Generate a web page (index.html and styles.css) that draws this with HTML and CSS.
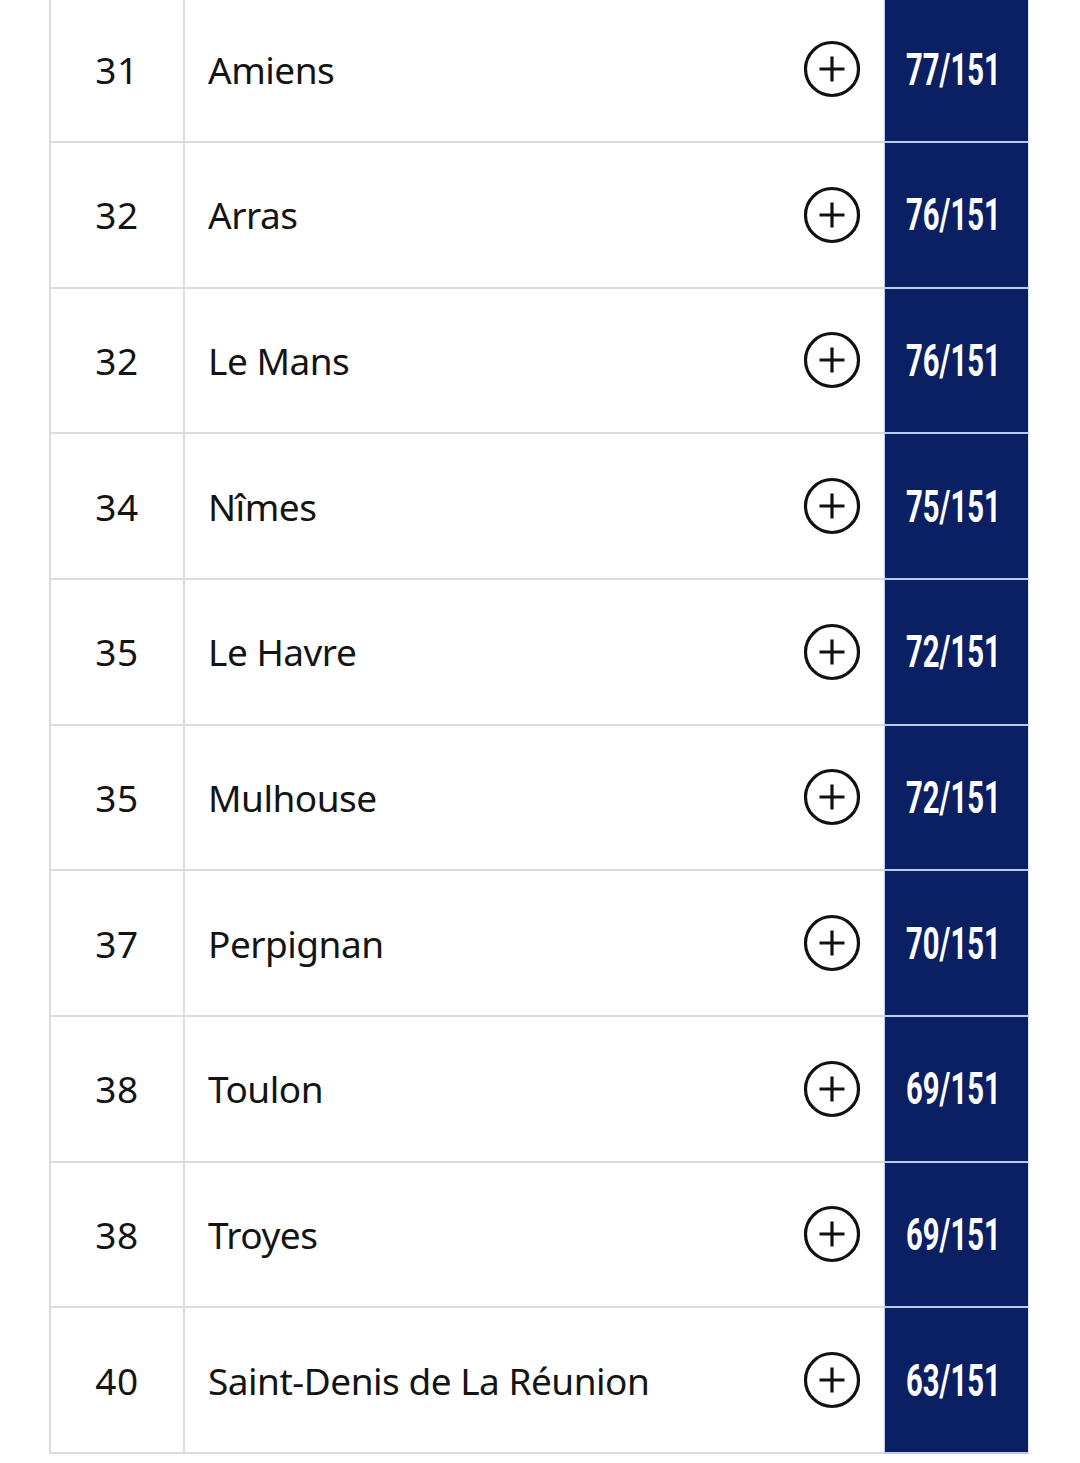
FILE: index.html
```html
<!DOCTYPE html>
<html lang="fr">
<head>
<meta charset="utf-8">
<title>Classement</title>
<link rel="stylesheet" href="styles.css">
</head>
<body>
<div class="table">
  <div class="row"><div class="rank">31</div><div class="name"><span>Amiens</span><svg class="plus" viewBox="0 0 58 58"><circle cx="29" cy="29" r="26.5"/><path d="M29 16.5v25M16.5 29h25"/></svg></div><div class="score"><span>77/151</span></div></div>
  <div class="row"><div class="rank">32</div><div class="name"><span>Arras</span><svg class="plus" viewBox="0 0 58 58"><circle cx="29" cy="29" r="26.5"/><path d="M29 16.5v25M16.5 29h25"/></svg></div><div class="score"><span>76/151</span></div></div>
  <div class="row"><div class="rank">32</div><div class="name"><span>Le Mans</span><svg class="plus" viewBox="0 0 58 58"><circle cx="29" cy="29" r="26.5"/><path d="M29 16.5v25M16.5 29h25"/></svg></div><div class="score"><span>76/151</span></div></div>
  <div class="row"><div class="rank">34</div><div class="name"><span>Nîmes</span><svg class="plus" viewBox="0 0 58 58"><circle cx="29" cy="29" r="26.5"/><path d="M29 16.5v25M16.5 29h25"/></svg></div><div class="score"><span>75/151</span></div></div>
  <div class="row"><div class="rank">35</div><div class="name"><span>Le Havre</span><svg class="plus" viewBox="0 0 58 58"><circle cx="29" cy="29" r="26.5"/><path d="M29 16.5v25M16.5 29h25"/></svg></div><div class="score"><span>72/151</span></div></div>
  <div class="row"><div class="rank">35</div><div class="name"><span>Mulhouse</span><svg class="plus" viewBox="0 0 58 58"><circle cx="29" cy="29" r="26.5"/><path d="M29 16.5v25M16.5 29h25"/></svg></div><div class="score"><span>72/151</span></div></div>
  <div class="row"><div class="rank">37</div><div class="name"><span>Perpignan</span><svg class="plus" viewBox="0 0 58 58"><circle cx="29" cy="29" r="26.5"/><path d="M29 16.5v25M16.5 29h25"/></svg></div><div class="score"><span>70/151</span></div></div>
  <div class="row"><div class="rank">38</div><div class="name"><span>Toulon</span><svg class="plus" viewBox="0 0 58 58"><circle cx="29" cy="29" r="26.5"/><path d="M29 16.5v25M16.5 29h25"/></svg></div><div class="score"><span>69/151</span></div></div>
  <div class="row"><div class="rank">38</div><div class="name"><span>Troyes</span><svg class="plus" viewBox="0 0 58 58"><circle cx="29" cy="29" r="26.5"/><path d="M29 16.5v25M16.5 29h25"/></svg></div><div class="score"><span>69/151</span></div></div>
  <div class="row"><div class="rank">40</div><div class="name"><span>Saint-Denis de La Réunion</span><svg class="plus" viewBox="0 0 58 58"><circle cx="29" cy="29" r="26.5"/><path d="M29 16.5v25M16.5 29h25"/></svg></div><div class="score"><span>63/151</span></div></div>
</div>
</body>
</html>
```

FILE: styles.css
```css
html, body {
  margin: 0;
  padding: 0;
  background: #ffffff;
}

body {
  font-family: "Noto Sans", "Open Sans", sans-serif;
  color: #141414;
}

.table {
  margin: -2.67px 0 0 49px;
  width: 980px;
  border-left: 2px solid #dcdcdc;
  box-sizing: border-box;
}

.row {
  display: grid;
  grid-template-columns: 134px 699px 145px;
  height: 145.67px;
}

.rank,
.name,
.score {
  box-sizing: border-box;
  border-bottom: 2px solid #dcdcdc;
  display: flex;
  align-items: center;
}

.rank {
  border-right: 2px solid #dcdcdc;
  justify-content: center;
  font-size: 37px;
  letter-spacing: 0.5px;
}

.name {
  justify-content: space-between;
  padding: 0 23px 0 23px;
  font-size: 37px;
  letter-spacing: -0.5px;
}

.plus {
  width: 58px;
  height: 58px;
  flex: none;
  fill: none;
  stroke: #111111;
  stroke-width: 3.2;
}

.score {
  background: #0b1f63;
  border-bottom-color: #bccaee;
  border-left: 1px solid #bccaee;
  border-right: 1px solid #dfe6f7;
  padding-left: 21px;
  color: #ffffff;
}

.score span {
  display: inline-block;
  font-family: Roboto, "Liberation Sans", sans-serif;
  font-weight: 700;
  font-size: 45px;
  transform: scaleX(0.65);
  transform-origin: left center;
  white-space: nowrap;
}
```
